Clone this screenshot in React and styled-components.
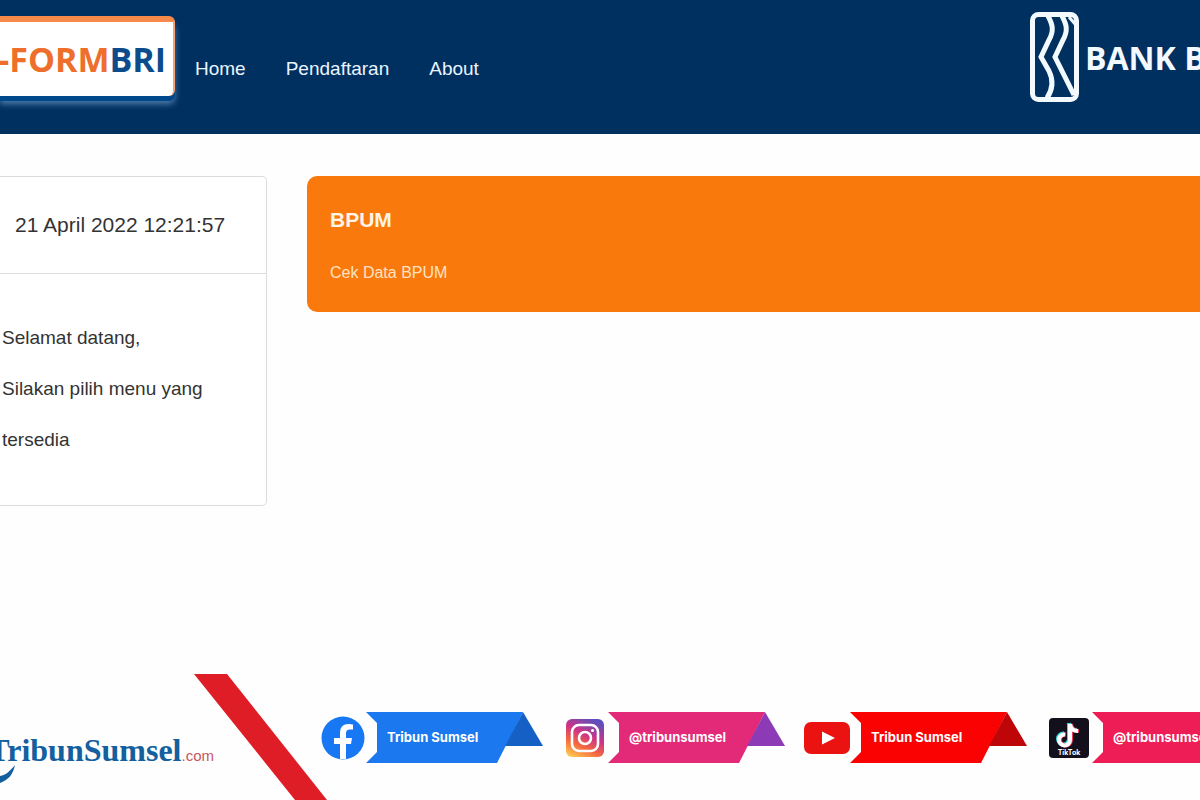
import React from "react";
import styled, { createGlobalStyle } from "styled-components";

const GlobalStyle = createGlobalStyle`
  * {
    box-sizing: border-box;
  }

  body {
    margin: 0;
    background-color: #fefefe;
    color: #333;
    font-family: "Liberation Sans", Arial, sans-serif;
  }
`;

const SCPage = styled.div`
  min-height: 100vh;
  display: flex;
  flex-direction: column;
  overflow: hidden;
`;

const SCHeader = styled.header`
  display: flex;
  align-items: flex-start;
  height: 134px;
  background-color: #00305f;
`;

const SCLogo = styled.a`
  display: flex;
  flex: none;
  align-items: center;
  justify-content: flex-end;
  width: 175px;
  height: 80px;
  margin-top: 16px;
  padding-right: 7px;
  background-color: white;
  border-top: 6px solid #f58a4b;
  border-right: 2px solid #f3a378;
  border-radius: 0 6px 6px 0;
  box-shadow: 0 5px 0 #00488c, 0 8px 6px #4f7fae;
  color: #ee6f2b;
  font-family: "Open Sans", "Noto Sans", sans-serif;
  font-size: 34px;
  font-weight: bold;
  text-decoration: none;
  white-space: nowrap;

  span {
    color: #0c4c8c;
  }
`;

const SCNav = styled.nav`
  display: flex;
  flex: 1;
  gap: 40px;
  padding: 54px 0 0 20px;
`;

const SCNavLink = styled.a`
  color: #eaf4ff;
  font-size: 19px;
  line-height: 30px;
  text-decoration: none;
`;

const SCBank = styled.div`
  display: flex;
  flex: none;
  gap: 6px;
  width: 170px;
  padding-top: 12px;
  overflow: hidden;
  color: #f2faff;
  font-family: "Open Sans", "Noto Sans", sans-serif;
  font-size: 32px;
  font-weight: bold;
  line-height: 92px;
  white-space: nowrap;

  svg {
    flex: none;
  }
`;

const SCMain = styled.main`
  display: grid;
  grid-template-columns: 267px 1fr;
  align-items: start;
  gap: 40px;
  flex: 1;
  padding-top: 42px;
`;

const SCCard = styled.section`
  border: 1px solid #dcdcdc;
  border-left: 0;
  border-radius: 0 5px 5px 0;
  background-color: white;
`;

const SCClock = styled.div`
  padding: 24px 15px;
  border-bottom: 1px solid #dcdcdc;
  font-size: 21px;
  line-height: 48px;
`;

const SCWelcome = styled.p`
  margin: 0;
  padding: 38px 40px 40px 2px;
  font-size: 19px;
  line-height: 51px;
`;

const SCBanner = styled.a`
  display: block;
  height: 136px;
  padding: 24px 23px;
  border-radius: 10px 0 0 10px;
  background-color: #f9790d;
  color: #fff4e6;
  text-decoration: none;

  h2 {
    margin: 0 0 16px;
    font-size: 21px;
    line-height: 40px;
  }

  p {
    margin: 0;
    color: #ffe2c2;
    font-size: 16px;
    line-height: 34px;
  }
`;

const SCFooter = styled.footer`
  display: flex;
  height: 126px;
`;

const SCTribun = styled.a`
  position: relative;
  display: flex;
  flex: none;
  align-items: baseline;
  justify-content: flex-end;
  width: 214px;
  margin-right: -20px;
  color: #14609f;
  font-family: "Liberation Serif", "Times New Roman", serif;
  font-size: 32px;
  font-weight: bold;
  line-height: 152px;
  text-decoration: none;

  small {
    color: #c9555c;
    font-family: "Liberation Sans", Arial, sans-serif;
    font-size: 15px;
    font-weight: normal;
  }
`;

const SCSwash = styled.svg`
  position: absolute;
  left: 0;
  bottom: 17px;
  width: 15px;
  height: 18px;
`;

const SCSlash = styled.svg`
  flex: none;
  width: 133px;
  height: 126px;
`;

const SCSocials = styled.div`
  display: flex;
  gap: 19px;
  margin-left: -7px;
  padding-top: 38px;
`;

const SCSocial = styled.a`
  display: grid;
  flex: none;
  grid-template-columns: 46px 177px;
  align-items: center;
  height: 51px;
  color: white;
  font-family: Inter, sans-serif;
  font-size: 13px;
  font-weight: bold;
  text-decoration: none;

  svg,
  span {
    grid-row: 1;
  }

  span {
    grid-column: 2;
    padding: 0 0 2px 21px;
  }
`;

const SCIcon = styled.svg`
  grid-column: 1;
  width: ${(props) => props.$size}px;
  height: ${(props) => props.$size}px;
  justify-self: center;
`;

const SCRibbon = styled.svg`
  grid-column: 2;
  width: 177px;
  height: 51px;
`;

function FacebookIcon() {
  return (
    <SCIcon $size={44} viewBox="0 0 44 44">
      <circle cx="22" cy="22" r="21.5" fill="#1877f2" />
      <path
        d="M19 43V28h-6v-6h6v-5c0-6 3-9 9-9l4 .4v5h-3c-3 0-4 1.500-4 4V22h6l-1 6h-5v15z"
        fill="white"
      />
    </SCIcon>
  );
}

function InstagramIcon() {
  return (
    <SCIcon $size={38} viewBox="0 0 38 38">
      <defs>
        <linearGradient id="insta" x1="0.2" y1="1" x2="0.7" y2="0">
          <stop offset="0" stopColor="#fdc550" />
          <stop offset="0.3" stopColor="#f5693f" />
          <stop offset="0.6" stopColor="#cf3484" />
          <stop offset="1" stopColor="#5b50bd" />
        </linearGradient>
      </defs>
      <rect width="38" height="38" rx="6" fill="url(#insta)" />
      <g fill="none" stroke="white" strokeWidth="2.6">
        <rect x="6" y="6" width="26" height="26" rx="7" />
        <circle cx="19" cy="19" r="6" />
      </g>
      <circle cx="26.500" cy="11.500" r="1.600" fill="white" />
    </SCIcon>
  );
}

function YoutubeIcon() {
  return (
    <SCIcon $size={46} viewBox="0 0 46 46">
      <rect y="7" width="46" height="32" rx="7" fill="#eb1212" />
      <path d="M18 16.500v13l13-6.500z" fill="white" />
    </SCIcon>
  );
}

function TiktokIcon() {
  const note = "M22 5v16a5.500 5.500 0 1 1-5-5.500M22 5c.5 4.500 3.500 7 8 7";
  return (
    <SCIcon $size={42} viewBox="0 0 42 42">
      <rect x="1" y="1" width="40" height="40" rx="4" fill="#14101b" />
      <g fill="none" strokeWidth="4">
        <path d={note} stroke="#3fd6dc" transform="translate(-1 1)" />
        <path d={note} stroke="#e8395e" transform="translate(1 2)" />
        <path d={note} stroke="white" transform="translate(0 2)" />
      </g>
      <text
        x="21"
        y="38"
        fill="white"
        fontFamily="Inter, sans-serif"
        fontSize="7"
        fontWeight="bold"
        textAnchor="middle"
      >
        TikTok
      </text>
    </SCIcon>
  );
}

const socials = [
  { name: "Tribun Sumsel", Icon: FacebookIcon, color: "#1b78ee", fold: "#1460c4" },
  { name: "@tribunsumsel", Icon: InstagramIcon, color: "#e22a78", fold: "#8c3ab5" },
  { name: "Tribun Sumsel", Icon: YoutubeIcon, color: "#fa0202", fold: "#be0608" },
  { name: "@tribunsumsel", Icon: TiktokIcon, color: "#ee1d56", fold: "#b51343" },
];

function Social({ name, Icon, color, fold }) {
  return (
    <SCSocial href="#">
      <Icon />
      <SCRibbon viewBox="0 0 177 51">
        <path d="M0 0H157L131 51H0L11 40V11z" fill={color} />
        <path d="M157 0L177 34H139z" fill={fold} />
      </SCRibbon>
      <span>{name}</span>
    </SCSocial>
  );
}

function BriMark() {
  return (
    <svg width="49" height="90" viewBox="0 0 49 90" fill="none" stroke="#f2faff">
      <rect x="2.500" y="2.500" width="44" height="85" rx="6" strokeWidth="5" />
      <g strokeWidth="5">
        <path d="M18 4c5 9 6 15 1 24l-8 17 8 14c4 8 4 18-2 27" />
        <path d="M32 4c5 9 6 15 1 24l-8 17 19 38" />
      </g>
      <path d="M39 5l6 7" strokeWidth="3" />
    </svg>
  );
}

function App() {
  return (
    <SCPage>
      <GlobalStyle />
      <SCHeader>
        <SCLogo href="#">
          -FORM<span>BRI</span>
        </SCLogo>
        <SCNav>
          <SCNavLink href="#">Home</SCNavLink>
          <SCNavLink href="#">Pendaftaran</SCNavLink>
          <SCNavLink href="#">About</SCNavLink>
        </SCNav>
        <SCBank>
          <BriMark />
          BANK BRI
        </SCBank>
      </SCHeader>

      <SCMain>
        <SCCard>
          <SCClock>21 April 2022 12:21:57</SCClock>
          <SCWelcome>
            Selamat datang,
            <br />
            Silakan pilih menu yang tersedia
          </SCWelcome>
        </SCCard>
        <SCBanner href="#">
          <h2>BPUM</h2>
          <p>Cek Data BPUM</p>
        </SCBanner>
      </SCMain>

      <SCFooter>
        <SCTribun href="#">
          TribunSumsel<small>.com</small>
          <SCSwash viewBox="0 0 15 18">
            <path d="M15 0C13 10 8 15 0 18V11C6 10 10 6 15 0z" fill="#14609f" />
          </SCSwash>
        </SCTribun>
        <SCSlash viewBox="0 0 133 126">
          <path d="M0 0H33L133 126H101z" fill="#df1d26" />
        </SCSlash>
        <SCSocials>
          {socials.map((social, i) => (
            <Social key={i} {...social} />
          ))}
        </SCSocials>
      </SCFooter>
    </SCPage>
  );
}

export default App;
